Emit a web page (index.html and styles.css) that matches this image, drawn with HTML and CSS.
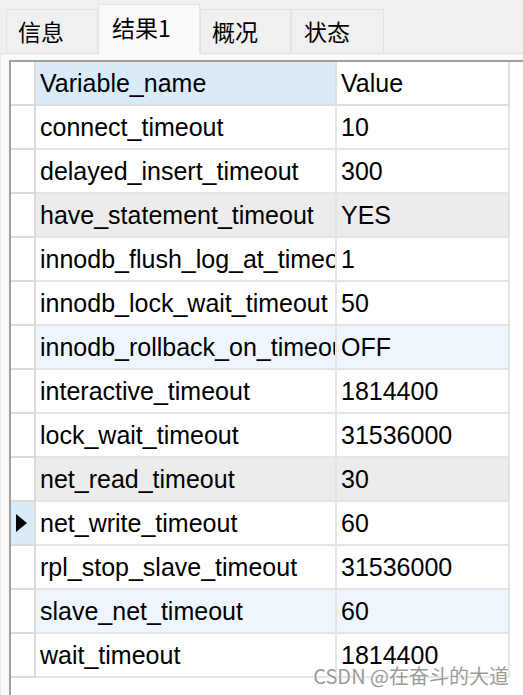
FILE: index.html
```html
<!DOCTYPE html>
<html>
<head>
<meta charset="utf-8">
<link rel="stylesheet" href="styles.css">
</head>
<body>
<div class="tabs">
  <div class="tab t1">信息</div>
  <div class="tab active">结果1</div>
  <div class="tab t3">概况</div>
  <div class="tab t4">状态</div>
</div>
<div class="panel">
  <div class="grid">
    <div class="row head"><div class="ind"></div><div class="cell name sel">Variable_name</div><div class="cell val">Value</div></div>
    <div class="row"><div class="ind"></div><div class="cell name">connect_timeout</div><div class="cell val">10</div></div>
    <div class="row"><div class="ind"></div><div class="cell name">delayed_insert_timeout</div><div class="cell val">300</div></div>
    <div class="row gray"><div class="ind"></div><div class="cell name">have_statement_timeout</div><div class="cell val">YES</div></div>
    <div class="row"><div class="ind"></div><div class="cell name">innodb_flush_log_at_timeout</div><div class="cell val">1</div></div>
    <div class="row"><div class="ind"></div><div class="cell name">innodb_lock_wait_timeout</div><div class="cell val">50</div></div>
    <div class="row blue"><div class="ind"></div><div class="cell name">innodb_rollback_on_timeout</div><div class="cell val">OFF</div></div>
    <div class="row"><div class="ind"></div><div class="cell name">interactive_timeout</div><div class="cell val">1814400</div></div>
    <div class="row"><div class="ind"></div><div class="cell name">lock_wait_timeout</div><div class="cell val">31536000</div></div>
    <div class="row gray"><div class="ind"></div><div class="cell name">net_read_timeout</div><div class="cell val">30</div></div>
    <div class="row"><div class="ind cur"><span class="tri"></span></div><div class="cell name">net_write_timeout</div><div class="cell val">60</div></div>
    <div class="row"><div class="ind"></div><div class="cell name">rpl_stop_slave_timeout</div><div class="cell val">31536000</div></div>
    <div class="row blue"><div class="ind"></div><div class="cell name">slave_net_timeout</div><div class="cell val">60</div></div>
    <div class="row"><div class="ind"></div><div class="cell name">wait_timeout</div><div class="cell val">1814400</div></div>
  </div>
</div>
<div class="watermark">CSDN @在奋斗的大道</div>
</body>
</html>
```

FILE: styles.css
```css
html, body {
  margin: 0;
  padding: 0;
  background: #f0f0f0;
  width: 523px;
  height: 695px;
  overflow: hidden;
  position: relative;
}
body {
  font-family: "Liberation Sans", "Noto Sans CJK SC", sans-serif;
  color: #000;
}
.tabs {
  height: 53px;
  display: flex;
  align-items: flex-end;
  padding-left: 6px;
  box-sizing: border-box;
}
.tab {
  box-sizing: border-box;
  height: 44px;
  border: 1px solid #e2e2e2;
  border-bottom: none;
  background: #f0f0f0;
  font-family: "Noto Sans CJK SC", sans-serif;
  font-size: 23px;
  line-height: 42px;
  padding-left: 11px;
}
.t1 { width: 92px; }
.active {
  width: 102px;
  height: 50px;
  background: #f9f9f9;
  line-height: 44px;
  padding-left: 13px;
  border-color: #e4e4e4;
  margin-bottom: -1px;
  position: relative;
  z-index: 1;
}
.t3 { width: 91px; }
.t4 { width: 93px; padding-left: 12px; }
.panel {
  height: 642px;
  box-sizing: border-box;
  background: #f9f9f9;
  border-top: 1px solid #e2e2e2;
  border-left: 1px solid #e6e6e6;
  padding: 6px 0 0 8px;
}
.grid {
  background: #fff;
  border-left: 2px solid #a0a0a0;
  border-top: 2px solid #a0a0a0;
  height: 100%;
  box-sizing: border-box;
}
.row {
  display: grid;
  grid-template-columns: 25px 301px 173px;
  height: 44px;
}
.ind {
  border-right: 2px solid #dadada;
  border-bottom: 2px solid #dadada;
  display: flex;
  align-items: center;
  justify-content: center;
  padding-left: 2px;
}
.cur { background: #d9eaf8; }
.tri {
  width: 0;
  height: 0;
  border-top: 9px solid transparent;
  border-bottom: 9px solid transparent;
  border-left: 11px solid #000;
  margin-right: 4px;
}
.cell {
  border-right: 2px solid #e4e4e4;
  border-bottom: 2px solid #e4e4e4;
  font-size: 25px;
  line-height: 42px;
  padding-left: 4px;
  white-space: nowrap;
  overflow: hidden;
}
.head .cell { border-color: #dddddd; }
.sel { background: #d9eaf8; }
.gray .cell { background: #ececec; }
.blue .cell { background: #eef5fd; }
.watermark {
  position: absolute;
  right: 14px;
  bottom: 5px;
  font-family: "Noto Sans CJK SC", sans-serif;
  font-size: 20px;
  color: #9a9a9a;
  text-shadow: 0 0 2px #fff, 0 0 2px #fff;
}
```
